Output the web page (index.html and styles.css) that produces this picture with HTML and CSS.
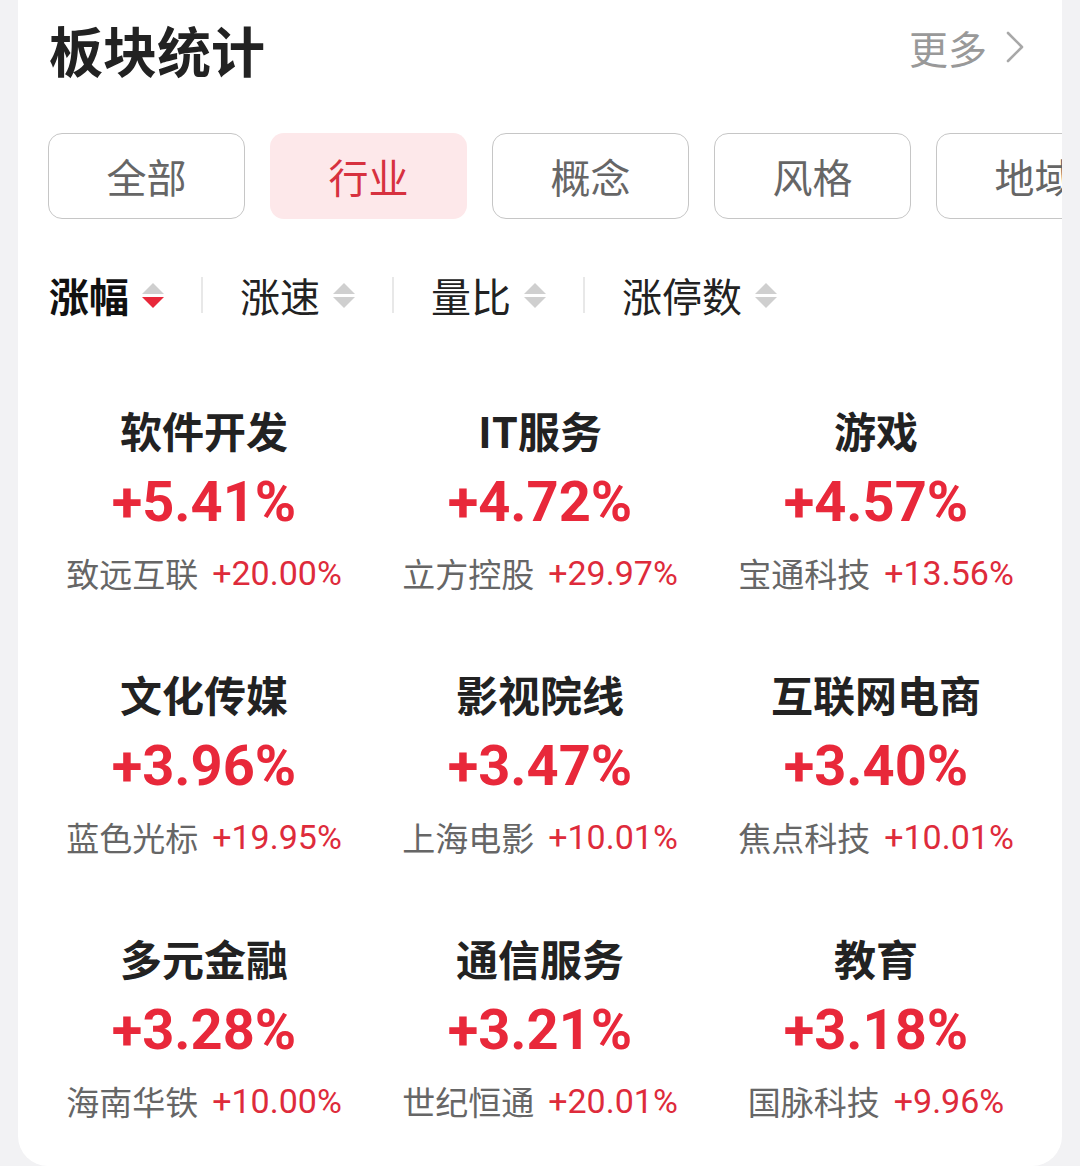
FILE: index.html
```html
<!DOCTYPE html>
<html lang="zh-CN">
<head>
<meta charset="utf-8">
<title>板块统计</title>
<link rel="stylesheet" href="styles.css">
</head>
<body>
<div class="card">
  <div class="header">
    <div class="title">板块统计</div>
    <div class="more">更多
      <svg class="chev" viewBox="0 0 20 34" width="20" height="34"><path d="M3 3 L17 17 L3 31" fill="none" stroke="#a8a8a8" stroke-width="2.6" stroke-linecap="round" stroke-linejoin="round"/></svg>
    </div>
  </div>
  <div class="tabs">
    <div class="tab">全部</div>
    <div class="tab active">行业</div>
    <div class="tab">概念</div>
    <div class="tab">风格</div>
    <div class="tab">地域</div>
  </div>
  <div class="sorts">
    <div class="sort on"><span>涨幅</span><span class="arr"><i class="up"></i><i class="dn red"></i></span></div>
    <div class="sep"></div>
    <div class="sort"><span>涨速</span><span class="arr"><i class="up"></i><i class="dn"></i></span></div>
    <div class="sep"></div>
    <div class="sort"><span>量比</span><span class="arr"><i class="up"></i><i class="dn"></i></span></div>
    <div class="sep"></div>
    <div class="sort"><span>涨停数</span><span class="arr"><i class="up"></i><i class="dn"></i></span></div>
  </div>
  <div class="grid">
    <div class="cell"><div class="name">软件开发</div><div class="pct">+5.41%</div><div class="stock"><span class="sn">致远互联</span><span class="sp">+20.00%</span></div></div>
    <div class="cell"><div class="name">IT服务</div><div class="pct">+4.72%</div><div class="stock"><span class="sn">立方控股</span><span class="sp">+29.97%</span></div></div>
    <div class="cell"><div class="name">游戏</div><div class="pct">+4.57%</div><div class="stock"><span class="sn">宝通科技</span><span class="sp">+13.56%</span></div></div>
    <div class="cell"><div class="name">文化传媒</div><div class="pct">+3.96%</div><div class="stock"><span class="sn">蓝色光标</span><span class="sp">+19.95%</span></div></div>
    <div class="cell"><div class="name">影视院线</div><div class="pct">+3.47%</div><div class="stock"><span class="sn">上海电影</span><span class="sp">+10.01%</span></div></div>
    <div class="cell"><div class="name">互联网电商</div><div class="pct">+3.40%</div><div class="stock"><span class="sn">焦点科技</span><span class="sp">+10.01%</span></div></div>
    <div class="cell"><div class="name">多元金融</div><div class="pct">+3.28%</div><div class="stock"><span class="sn">海南华铁</span><span class="sp">+10.00%</span></div></div>
    <div class="cell"><div class="name">通信服务</div><div class="pct">+3.21%</div><div class="stock"><span class="sn">世纪恒通</span><span class="sp">+20.01%</span></div></div>
    <div class="cell"><div class="name">教育</div><div class="pct">+3.18%</div><div class="stock"><span class="sn">国脉科技</span><span class="sp">+9.96%</span></div></div>
  </div>
</div>
</body>
</html>
```
FILE: styles.css
```css
html, body {
  margin: 0;
  padding: 0;
  background: #f2f2f4;
}
body {
  font-family: "Noto Sans CJK SC", "Noto Sans", sans-serif;
  width: 1080px;
  height: 1166px;
  overflow: hidden;
}
.card {
  margin-left: 18px;
  width: 1044px;
  height: 1166px;
  background: #fff;
  border-radius: 0 0 30px 30px;
  overflow: hidden;
  box-sizing: border-box;
}
.header {
  display: flex;
  justify-content: space-between;
  align-items: center;
  padding: 18px 37px 0 31px;
  height: 64px;
}
.title {
  font-size: 54px;
  line-height: 64px;
  font-weight: 700;
  color: #222;
}
.more {
  display: flex;
  align-items: center;
  gap: 18px;
  font-size: 39px;
  line-height: 64px;
  color: #999;
  margin-top: -6px;
}
.chev { display: block; }
.tabs {
  display: flex;
  gap: 25px;
  margin-top: 51px;
  padding-left: 30px;
  white-space: nowrap;
}
.tab {
  flex: 0 0 auto;
  width: 197px;
  height: 86px;
  box-sizing: border-box;
  border: 1.5px solid #c6c6c6;
  border-radius: 14px;
  display: flex;
  align-items: center;
  justify-content: center;
  font-size: 40px;
  color: #666;
}
.tab.active {
  border-color: transparent;
  background: #fde8ea;
  color: #d7313f;
}
.sorts {
  display: flex;
  align-items: center;
  margin-top: 52px;
  padding-left: 31px;
  height: 48px;
}
.sort {
  display: flex;
  align-items: center;
  gap: 13px;
  font-size: 40px;
  line-height: 48px;
  color: #222;
}
.sort.on { font-weight: 700; color: #111; }
.arr {
  display: flex;
  flex-direction: column;
  gap: 3px;
  width: 22px;
  align-items: center;
}
.arr i {
  display: block;
  width: 0;
  height: 0;
  border-left: 11px solid transparent;
  border-right: 11px solid transparent;
}
.arr .up { border-bottom: 11px solid #cfcfcf; }
.arr .dn { border-top: 11px solid #cfcfcf; }
.arr .dn.red { border-top-color: #e8283a; }
.sep {
  width: 2px;
  height: 36px;
  background: #e8e8e8;
  margin: 0 37px;
}
.grid {
  display: grid;
  grid-template-columns: repeat(3, 336px);
  grid-auto-rows: 184px;
  row-gap: 80px;
  margin-top: 88px;
  padding-left: 18px;
}
.cell {
  display: flex;
  flex-direction: column;
  align-items: center;
}
.name {
  font-size: 42px;
  line-height: 46px;
  font-weight: 700;
  color: #222;
}
.pct {
  margin-top: 17px;
  font-family: Roboto, "Liberation Sans", sans-serif;
  font-size: 56px;
  line-height: 64px;
  font-weight: 700;
  color: #e8283a;
}
.stock {
  margin-top: 19px;
  display: flex;
  align-items: center;
  gap: 14px;
  line-height: 40px;
}
.sn {
  font-size: 33px;
  color: #666;
}
.sp {
  font-family: Roboto, "Liberation Sans", sans-serif;
  font-size: 34px;
  color: #de2b3b;
}
```
